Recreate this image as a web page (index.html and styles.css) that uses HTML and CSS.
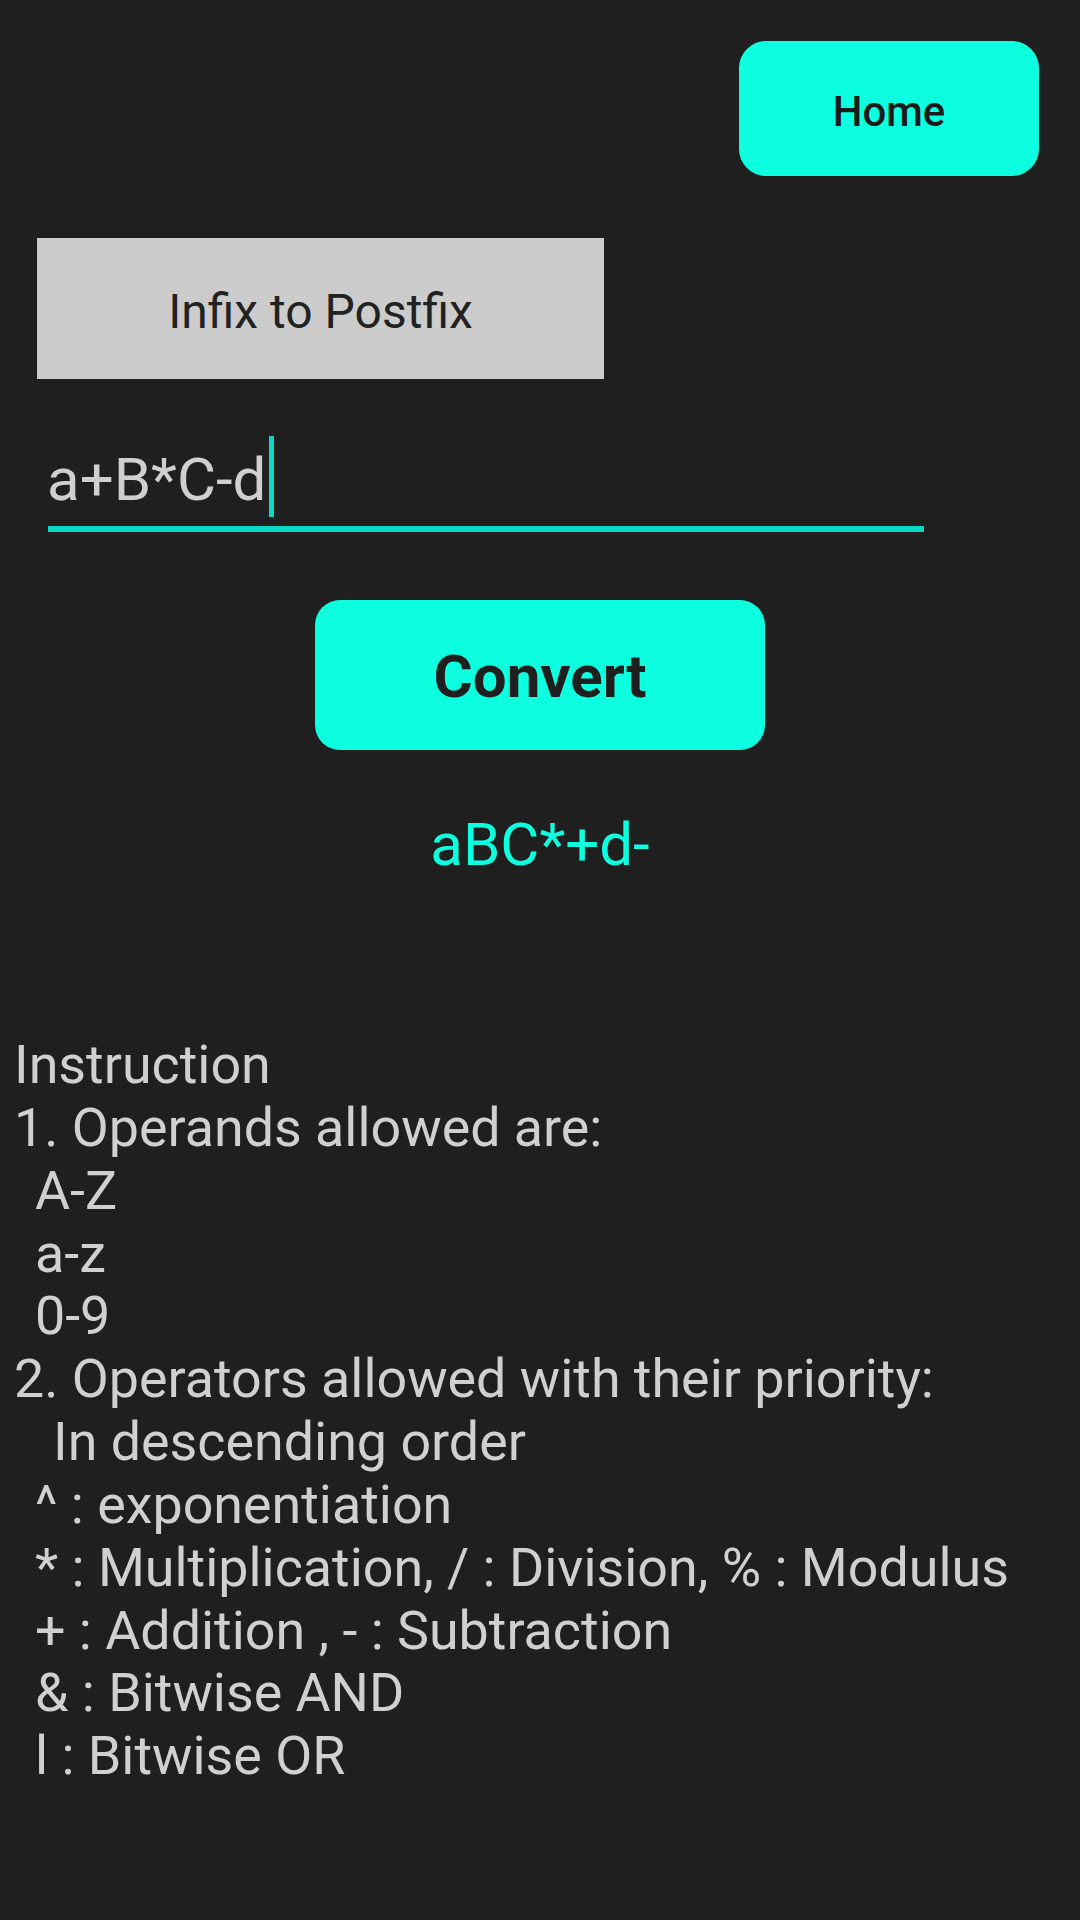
FILE: index.html
```html
<!DOCTYPE html>
<html lang="en">
<head>
<meta charset="utf-8">
<title>Infix to Postfix</title>
<link rel="stylesheet" href="styles.css">
</head>
<body>
<div class="page">
  <div class="topbar">
    <button class="home-btn">Home</button>
  </div>
  <div class="mode-box">Infix to Postfix</div>
  <div class="input-field">
    <span class="input-value">a+B*C-d</span><span class="caret"></span>
  </div>
  <div class="convert-row">
    <button class="convert-btn">Convert</button>
  </div>
  <div class="result">aBC*+d-</div>
  <div class="instructions">
    <div class="line">Instruction</div>
    <div class="line">1. Operands allowed are:</div>
    <div class="line ind">A-Z</div>
    <div class="line ind">a-z</div>
    <div class="line ind">0-9</div>
    <div class="line">2. Operators allowed with their priority:</div>
    <div class="line ind2">In descending order</div>
    <div class="line ind">^ : exponentiation</div>
    <div class="line ind">* : Multiplication, / : Division, % : Modulus</div>
    <div class="line ind">+ : Addition , - : Subtraction</div>
    <div class="line ind">&amp; : Bitwise AND</div>
    <div class="line ind">l : Bitwise OR</div>
  </div>
</div>
</body>
</html>
```

FILE: styles.css
```css
html, body {
  margin: 0;
  padding: 0;
  background: #1f1f1f;
}

body {
  font-family: Roboto, "Noto Sans", "Liberation Sans", sans-serif;
  width: 1080px;
  min-height: 1920px;
}

.page {
  display: flex;
  flex-direction: column;
}

.topbar {
  display: flex;
  justify-content: flex-end;
  padding: 41px 41px 0 0;
}

.home-btn {
  width: 300px;
  height: 135px;
  border: none;
  border-radius: 27px;
  background: #0cffdf;
  color: #1a1a1a;
  font-family: Roboto, sans-serif;
  font-weight: 500;
  font-size: 42px;
  padding: 5px 0 0;
}

.mode-box {
  margin: 62px 0 0 37px;
  width: 567px;
  height: 141px;
  box-sizing: border-box;
  padding-top: 5px;
  background: #cccccc;
  color: #222222;
  font-size: 48px;
  display: flex;
  align-items: center;
  justify-content: center;
}

.input-field {
  margin: 61px 0 0 48px;
  width: 876px;
  padding-bottom: 6px;
  border-bottom: 6px solid #0cd8c5;
  font-size: 60px;
  line-height: 80px;
  color: #cfcfcf;
  height: 80px;
}

.input-value {
  margin-left: -1px;
}

.caret {
  display: inline-block;
  width: 5px;
  height: 81px;
  margin-left: 3px;
  margin-top: -10px;
  vertical-align: -17px;
  background: #0cd8c5;
}

.convert-row {
  display: flex;
  justify-content: center;
  margin-top: 68px;
}

.convert-btn {
  width: 450px;
  height: 150px;
  border: none;
  border-radius: 25px;
  background: #0cffdf;
  color: #1f1f1f;
  font-family: Roboto, sans-serif;
  font-weight: 700;
  font-size: 60px;
  padding: 2px 0 0;
}

.result {
  margin-top: 60px;
  text-align: center;
  font-size: 60px;
  line-height: 70px;
  color: #0cffdf;
}

.instructions {
  margin-top: 154px;
  padding-left: 14px;
  font-size: 53.8px;
  line-height: 62.85px;
  color: #d0d0d0;
}

.line.ind {
  padding-left: 21px;
}

.line.ind2 {
  padding-left: 39px;
}
```
